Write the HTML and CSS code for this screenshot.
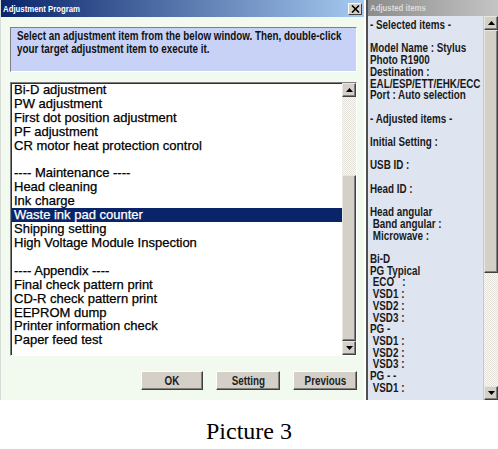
FILE: index.html
```html
<!DOCTYPE html>
<html lang="en">
<head>
  <meta charset="UTF-8" />
  <title>Adjustment Program</title>
  <link rel="stylesheet" href="styles.css">
</head>
<body>
  <div class="screen">
    <div class="dialog">
      <div class="titlebar">
        <span class="title narrow">Adjustment Program</span>
        <span class="close">
          <svg width="9" height="8" viewBox="0 0 9 8"><path d="M1 0.5 L8 7.5 M8 0.5 L1 7.5" stroke="#000" stroke-width="1.6"/></svg>
        </span>
      </div>
      <div class="dialog-body">
        <div class="hint"><span class="narrow">Select an adjustment item from the below window. Then, double-click
your target adjustment item to execute it.</span></div>

        <div class="listbox">
          <ul class="items">
            <li>Bi-D adjustment</li>
            <li>PW adjustment</li>
            <li>First dot position adjustment</li>
            <li>PF adjustment</li>
            <li>CR motor heat protection control</li>
            <li>&nbsp;</li>
            <li>---- Maintenance ----</li>
            <li>Head cleaning</li>
            <li>Ink charge</li>
            <li class="selected">Waste ink pad counter</li>
            <li>Shipping setting</li>
            <li>High Voltage Module Inspection</li>
            <li>&nbsp;</li>
            <li>---- Appendix ----</li>
            <li>Final check pattern print</li>
            <li>CD-R check pattern print</li>
            <li>EEPROM dump</li>
            <li>Printer information check</li>
            <li>Paper feed test</li>
          </ul>
          <div class="vscroll">
            <div class="arrow"><svg width="7" height="4" viewBox="0 0 7 4"><polygon points="3.5,0 7,4 0,4" fill="#000"/></svg></div>
            <div class="track list-track-top"></div>
            <div class="thumb list-thumb"></div>
            <div class="arrow"><svg width="7" height="4" viewBox="0 0 7 4"><polygon points="0,0 7,0 3.5,4" fill="#000"/></svg></div>
          </div>
        </div>

        <div class="actions">
          <button class="btn btn-ok"><span class="narrow">OK</span></button>
          <button class="btn"><span class="narrow">Setting</span></button>
          <button class="btn"><span class="narrow">Previous</span></button>
        </div>
      </div>
    </div>

    <div class="sidepanel">
      <div class="side-title"><span class="narrow">Adjusted items</span></div>
      <div class="side-body">
        <div class="side-text"><div class="narrow">- Selected items -

Model Name : Stylus
Photo R1900
Destination :
EAL/ESP/ETT/EHK/ECC
Port : Auto selection

- Adjusted items -

Initial Setting :

USB ID :

Head ID :

Head angular
 Band angular :
 Microwave :

Bi-D
PG Typical
 ECO   :
 VSD1 :
 VSD2 :
 VSD3 :
PG -
 VSD1 :
 VSD2 :
 VSD3 :
PG - -
 VSD1 :</div></div>
        <div class="vscroll side-scroll">
          <div class="arrow"><svg width="7" height="4" viewBox="0 0 7 4"><polygon points="3.5,0 7,4 0,4" fill="#000"/></svg></div>
          <div class="thumb side-thumb"></div>
          <div class="track"></div>
          <div class="arrow"><svg width="7" height="4" viewBox="0 0 7 4"><polygon points="0,0 7,0 3.5,4" fill="#000"/></svg></div>
        </div>
      </div>
    </div>
  </div>

  <p class="caption">Picture 3</p>
</body>
</html>
```

FILE: styles.css
```css
body {
  margin: 0;
  background: #ffffff;
  color: #000;
  font-family: "Liberation Sans", Arial, sans-serif;
}
.screen {
  display: flex;
  width: 498px;
  height: 400px;
  overflow: hidden;
}

/* the dialog text is a narrow bold face: squeeze Liberation Sans Bold */
.narrow {
  display: inline-block;
  white-space: pre;
  font-weight: 700;
  transform: scaleX(0.82);
  transform-origin: 0 0;
}

/* main dialog */
.dialog {
  flex: 0 0 364px;
  width: 364px;
  min-width: 0;
  overflow: hidden;
  background: #f2faef;
  border-left: 1px solid #d8dcd8;
  box-sizing: border-box;
  display: flex;
  flex-direction: column;
}
.titlebar {
  height: 17px;
  background: linear-gradient(to right, #0a246a, #a6caf0);
  display: flex;
  align-items: center;
  justify-content: space-between;
  padding: 0 2px 0 2px;
}
.title {
  font-size: 9.5px;
  line-height: 12px;
  color: #fff;
}
.close {
  width: 14px;
  height: 12px;
  background: #d4d0c8;
  border: 1px solid;
  border-color: #fff #404040 #404040 #fff;
  box-sizing: border-box;
  display: flex;
  align-items: center;
  justify-content: center;
}
.dialog-body {
  padding: 10px 7px 0 9px;
}
.hint {
  height: 45px;
  box-sizing: border-box;
  overflow: hidden;
  background: #c8d2f6;
  border: 1px solid;
  border-color: #808080 #ffffff #ffffff #808080;
  padding: 2px 0 0 6px;
  font-size: 12px;
  line-height: 13px;
  color: #111;
}

.listbox {
  margin-top: 10px;
  height: 274px;
  box-sizing: border-box;
  display: flex;
  background: #fff;
  border: 1px solid;
  border-color: #808080 #ffffff #ffffff #808080;
  box-shadow: inset 1px 1px #303030;
}
.items {
  flex: 1;
  list-style: none;
  margin: 0;
  padding: 0 0 0 1px;
  font-size: 13px;
  line-height: 13.9px;
  -webkit-text-stroke: 0.25px #000;
}
.items li {
  padding-left: 2px;
  white-space: nowrap;
}
.items .selected {
  background: #0a246a;
  color: #fff;
  -webkit-text-stroke: 0.25px #fff;
}

/* scrollbars */
.vscroll {
  flex: 0 0 14px;
  display: flex;
  flex-direction: column;
}
.arrow, .thumb {
  background: #d4d0c8;
  border: 1px solid;
  border-color: #e8e6e0 #404040 #404040 #e8e6e0;
  box-shadow: inset -1px -1px #808080;
  box-sizing: border-box;
}
.arrow {
  height: 14px;
  display: flex;
  align-items: center;
  justify-content: center;
}
.track {
  flex: 1;
  background: repeating-conic-gradient(#e4e1da 0 25%, #fafaf8 0 50%) 0 0 / 2px 2px;
}
.list-track-top {
  flex: 0 0 78px;
}
.list-thumb {
  flex: 1;
}

.actions {
  margin-top: 15px;
  display: flex;
  justify-content: flex-end;
  gap: 13px;
}
.btn {
  width: 64px;
  height: 19px;
  padding: 0;
  background: #d4d0c8;
  border: 1px solid;
  border-color: #ffffff #404040 #404040 #ffffff;
  box-shadow: inset -1px -1px #808080;
  font-family: "Liberation Sans", Arial, sans-serif;
  font-size: 12px;
  color: #222;
}
.btn .narrow {
  transform-origin: 50% 50%;
}
.btn-ok {
  width: 62px;
}

/* adjusted items panel */
.sidepanel {
  flex: 1;
  min-width: 0;
  margin-left: 2px;
  border-left: 2px solid #505050;
  display: flex;
  flex-direction: column;
}
.side-title {
  height: 16px;
  background: linear-gradient(to right, #8c8c8c, #c4c4c4);
  font-size: 9.5px;
  line-height: 16px;
  color: #dcdcdc;
  padding-left: 2px;
  overflow: hidden;
}
.side-body {
  flex: 1;
  min-height: 0;
  display: flex;
  background: #dfe5f0;
}
.side-text {
  flex: 1;
  min-width: 0;
  overflow: hidden;
  padding: 4px 0 0 2px;
  font-size: 12px;
  line-height: 11.7px;
  color: #1a1a1a;
}
.side-scroll {
  border-left: 1px solid #c8c8c8;
}
.side-thumb {
  flex: 0 0 243px;
}

.caption {
  margin: 17px 0 0;
  text-align: center;
  font-family: "Liberation Serif", serif;
  font-size: 24px;
  line-height: 28px;
}
```
